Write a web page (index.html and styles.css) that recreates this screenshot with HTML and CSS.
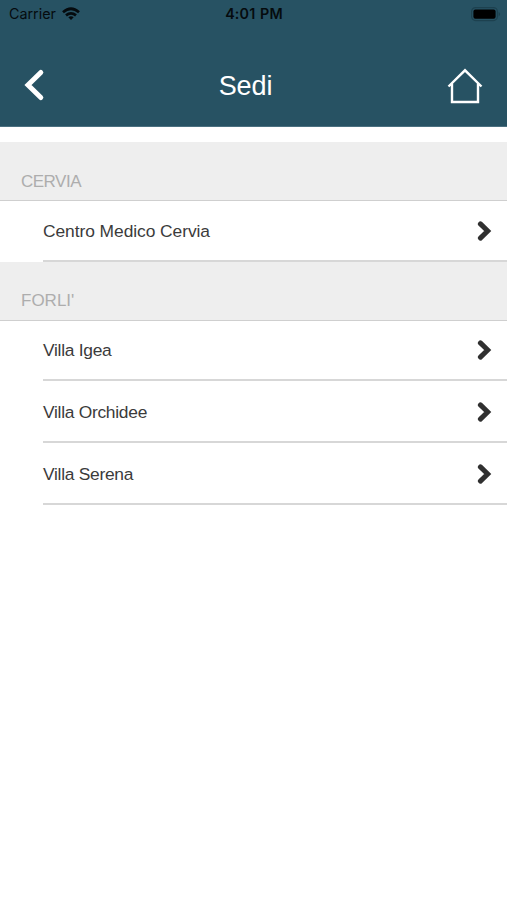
FILE: index.html
```html
<!DOCTYPE html>
<html lang="it">
<head>
<meta charset="utf-8">
<title>Sedi</title>
<link rel="stylesheet" href="styles.css">
</head>
<body>
<header class="header">
  <div class="status">
    <div class="carrier"><span>Carrier</span>
      <svg width="18" height="14" viewBox="0 0 18 14" fill="none" stroke="#050b0e" stroke-width="2.7"><path d="M1 5.2Q9-1.7 17 5.2M4 8.4q5-4.2 10 0"/><path d="M6.3 10.3q2.7-2.2 5.4 0L9 13z" fill="#050b0e" stroke="none"/></svg>
    </div>
    <span class="time">4:01 PM</span>
    <svg class="battery" width="30" height="15" viewBox="0 0 30 15"><rect x=".6" y=".6" width="25.8" height="13" rx="4" fill="none" stroke="#1d414f" stroke-width="1.2"/><rect x="2.4" y="2.4" width="22.2" height="9.4" rx="2" fill="#000"/><path d="M27.6 4.7q3 2.4 0 4.8z" fill="#1d414f"/></svg>
  </div>
  <div class="nav">
    <svg width="22" height="34" viewBox="0 0 22 34" fill="none" stroke="#fff" stroke-width="5" stroke-linecap="round"><path d="M17.8 4.5L5 17l12.8 12.5"/></svg>
    <h1 class="title">Sedi</h1>
    <svg width="36" height="36" viewBox="0 0 36 36" fill="none" stroke="#fff" stroke-width="2.4"><path d="M1.5 18.5L18 2.3l16.5 16.2M5 15.8v18.2h26V15.8"/></svg>
  </div>
</header>
<main class="list">
  <h2 class="section tight">CERVIA</h2>
  <ul class="rows">
    <li class="row"><span class="wide">Centro Medico Cervia</span><svg class="chevron" viewBox="0 0 16 22"><path d="M3.4 3.9L10.7 11l-7.3 7.1"/></svg></li>
  </ul>
  <h2 class="section">FORLI'</h2>
  <ul class="rows">
    <li class="row short"><span>Villa Igea</span><svg class="chevron" viewBox="0 0 16 22"><path d="M3.4 3.9L10.7 11l-7.3 7.1"/></svg></li>
    <li class="row tall"><span>Villa Orchidee</span><svg class="chevron" viewBox="0 0 16 22"><path d="M3.4 3.9L10.7 11l-7.3 7.1"/></svg></li>
    <li class="row tall"><span>Villa Serena</span><svg class="chevron" viewBox="0 0 16 22"><path d="M3.4 3.9L10.7 11l-7.3 7.1"/></svg></li>
  </ul>
</main>
</body>
</html>
```
FILE: styles.css
```css
* { box-sizing: border-box; }
body { margin: 0; background: #fff; font-family: "Liberation Sans", Arial, sans-serif; color: #3b3b3b; }
.header { height: 127px; background: #275263; border-bottom: 1px solid #4b7080; }
.status {
  height: 28px;
  padding: 0 7px 0 9px;
  display: grid;
  grid-template-columns: 1fr auto 1fr;
  align-items: center;
  color: #050b0e;
  font: 15px/28px Inter, sans-serif;
}
.carrier { display: flex; align-items: center; gap: 6px; font-size: 14.3px; }
.time { margin-right: 1px; font-size: 14.3px; font-weight: 600; letter-spacing: .15px; word-spacing: 1px; }
.battery { justify-self: end; margin-right: -1px; }
.nav {
  height: 98px;
  padding: 18px 24px 0 23px;
  display: grid;
  grid-template-columns: 1fr auto 1fr;
  align-items: start;
}
.nav > svg { margin-top: 22px; }
.nav > svg:last-child { justify-self: end; }
.title { margin: 24px 15px 0 0; color: #fff; font-size: 27px; line-height: 32px; font-weight: 400; letter-spacing: -.1px; }
.list { padding-top: 15px; }
.section {
  height: 59px;
  margin: 0;
  padding: 29px 21px 0;
  background: #eee;
  border-bottom: 1px solid #cfcfcf;
  color: #adadad;
  font-size: 17px;
  line-height: 20px;
  font-weight: 400;
}
.tight { padding-top: 30px; letter-spacing: -.5px; }
.rows { margin: 0; padding: 0 0 0 43px; list-style: none; }
.row {
  height: 61px;
  padding-right: 14px;
  display: flex;
  align-items: center;
  justify-content: space-between;
  border-bottom: 2px solid #d7d7d7;
  font-size: 17.4px;
  letter-spacing: -.28px;
}
.wide { padding-top: 2px; letter-spacing: -.06px; }
.short { height: 60px; }
.short span { padding-top: 1px; }
.tall { height: 62px; padding-top: 1px; }
.tall span { padding-top: 2px; }
.chevron { width: 16px; height: 22px; fill: none; stroke: #303030; stroke-width: 5; stroke-linecap: round; }
```
